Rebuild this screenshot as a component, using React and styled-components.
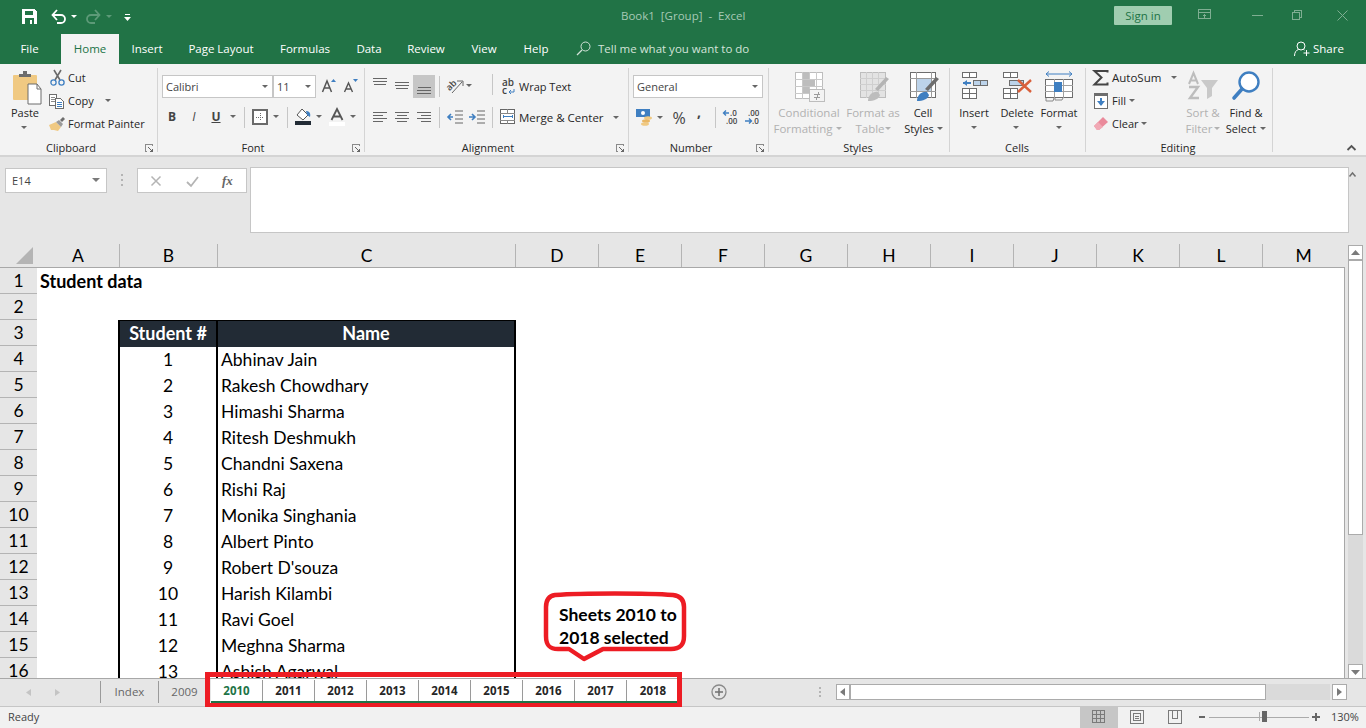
import React from 'react';
import styled, { createGlobalStyle } from 'styled-components';

const UI_FONT = '"Open Sans", "Noto Sans", "Liberation Sans", sans-serif';
const CELL_FONT = 'Lato, "Liberation Sans", sans-serif';

const GlobalStyle = createGlobalStyle`
  html, body {
    margin: 0;
    padding: 0;
    width: 1366px;
    height: 728px;
    overflow: hidden;
    background: #e6e6e6;
    font-family: ${UI_FONT};
  }
`;

const Window = styled.div`
  position: relative;
  width: 1366px;
  height: 728px;
  overflow: hidden;
`;

/* title bar and tabs */
const TitleBar = styled.div`
  position: absolute;
  left: 0;
  top: 0;
  width: 1366px;
  height: 64px;
  background: #217346;
`;

const Title = styled.div`
  position: absolute;
  left: 621px;
  top: 7px;
  font-size: 11.5px;
  line-height: 18px;
  color: #a6c9b5;
  white-space: pre;
`;

const SignIn = styled.div`
  position: absolute;
  left: 1114px;
  top: 6px;
  width: 58px;
  height: 19px;
  background: #a0cdb0;
  border-radius: 1px;
  color: #217346;
  font-size: 11.5px;
  line-height: 19px;
  text-align: center;
`;

const Tab = styled.div`
  position: absolute;
  left: ${(p) => p.$left}px;
  width: ${(p) => p.$width}px;
  top: 34px;
  height: 30px;
  line-height: 30px;
  text-align: center;
  font-size: 11.5px;
  color: ${(p) => (p.$active ? '#217346' : '#ffffff')};
  background: ${(p) => (p.$active ? '#f3f3f3' : 'transparent')};
`;

const TellMe = styled.div`
  position: absolute;
  left: 598px;
  top: 34px;
  line-height: 30px;
  font-size: 11.5px;
  color: #d3e3d9;
`;

const Share = styled.div`
  position: absolute;
  left: 1313px;
  top: 34px;
  line-height: 30px;
  font-size: 11.5px;
  color: #ffffff;
`;

/* ribbon */
const Ribbon = styled.div`
  position: absolute;
  left: 0;
  top: 64px;
  width: 1366px;
  height: 93px;
  background: #f3f3f3;
  border-bottom: 2px solid #d4d4d4;
  box-sizing: border-box;
`;

const GroupSep = styled.div`
  position: absolute;
  left: ${(p) => p.$x}px;
  top: 4px;
  width: 1px;
  height: 84px;
  background: #d4d4d4;
`;

const ToolSep = styled.div`
  position: absolute;
  left: ${(p) => p.$x}px;
  top: ${(p) => p.$y}px;
  width: 1px;
  height: 21px;
  background: #c6c6c6;
`;

const GroupLabel = styled.div`
  position: absolute;
  left: ${(p) => p.$center - 60}px;
  width: 120px;
  top: 75px;
  line-height: 17px;
  text-align: center;
  font-size: 11px;
  color: #262626;
`;

const SmallLabel = styled.div`
  position: absolute;
  left: ${(p) => p.$x}px;
  top: ${(p) => p.$y - 64 - 9}px;
  line-height: 18px;
  font-size: ${(p) => p.$size || 11}px;
  white-space: nowrap;
  color: #262626;
`;

const BigLabel = styled.div`
  position: absolute;
  left: ${(p) => p.$center - 50}px;
  width: 100px;
  top: ${(p) => p.$y - 64 - 9}px;
  line-height: 18px;
  text-align: center;
  font-size: ${(p) => (p.$dim ? 11.5 : 11)}px;
  white-space: nowrap;
  color: ${(p) => (p.$dim ? '#b1b1b1' : '#262626')};
`;

const Combo = styled.div`
  position: absolute;
  left: ${(p) => p.$x}px;
  top: 11px;
  width: ${(p) => p.$width}px;
  height: 23px;
  box-sizing: border-box;
  background: #ffffff;
  border: 1px solid #c6c6c6;
  padding-left: 3px;
  font-size: 11px;
  line-height: 21px;
  color: #444444;
`;

const Selected = styled.div`
  position: absolute;
  left: 413px;
  top: 11px;
  width: 22px;
  height: 23px;
  background: #c6c6c6;
`;

const Glyph = styled.div`
  position: absolute;
  left: ${(p) => p.$x}px;
  top: ${(p) => p.$y - 64 - 10}px;
  width: 16px;
  text-align: center;
  line-height: 20px;
  font-size: ${(p) => p.$size || 12}px;
  font-weight: ${(p) => p.$weight || 400};
  font-style: ${(p) => (p.$italic ? 'italic' : 'normal')};
  text-decoration: ${(p) => (p.$under ? 'underline' : 'none')};
  color: #444444;
`;

const IconText = styled.text`
  font-family: ${UI_FONT};
  font-size: ${(p) => p.$size || 9}px;
  font-weight: 600;
  fill: #444444;
`;

const IconBox = styled.svg`
  position: absolute;
  left: ${(p) => p.$x}px;
  top: ${(p) => p.$y}px;
  overflow: visible;
`;

/* each drawing takes page coordinates; the ribbon ones are shifted by the ribbon top */
const Draw = ({ x, y, w, h, children, crisp, ribbon }) => (
  <IconBox
    $x={x}
    $y={ribbon ? y - 64 : y}
    width={w}
    height={h}
    viewBox={`0 0 ${w} ${h}`}
    shapeRendering={crisp ? 'crispEdges' : 'auto'}
  >
    {children}
  </IconBox>
);

const Caret = ({ x, y, color = '#666666' }) => (
  <Draw x={x - 3} y={y - 2} w={6} h={4} ribbon>
    <path d="M0 0h6L3 3z" fill={color} />
  </Draw>
);

const Launcher = ({ x }) => (
  <Draw x={x - 4} y={144} w={8} h={8} ribbon crisp>
    <path d="M0 0h7M0 0v7M0 7h2M7 0v2" stroke="#8a8a8a" fill="none" />
    <path d="M3 3l4 4M5 7h3M7 5v3" stroke="#666666" fill="none" />
  </Draw>
);

const Lines = ({ x, y, widths, gap = 3, color = '#666666', w = 16 }) => (
  <Draw x={x} y={y} w={w} h={widths.length * gap + 1} ribbon crisp>
    {widths.map((item, i) => (
      <rect key={i} x={item[0]} y={i * gap} width={item[1]} height={1} fill={color} />
    ))}
  </Draw>
);

const RibbonIcons = () => (
  <>
    {/* paste */}
    <Draw x={13} y={71} w={29} h={32} ribbon>
      <rect x="0" y="4" width="24" height="25" rx="1" fill="#f0c982" />
      <path d="M6 6V3h4V0h4v3h4v3z" fill="#6d6d6d" />
      <path d="M15 13h9l4 5v15H15z" fill="#ffffff" stroke="#6d6d6d" />
      <path d="M24 13v5h4" fill="none" stroke="#6d6d6d" />
    </Draw>
    {/* cut */}
    <Draw x={50} y={70} w={15} h={16} ribbon>
      <path d="M4 0l6 10M11 0L5 10" stroke="#6a6a6a" strokeWidth="1.6" fill="none" />
      <circle cx="3.5" cy="12.5" r="2.6" fill="none" stroke="#3f7fc1" strokeWidth="1.3" />
      <circle cx="11.5" cy="12.5" r="2.6" fill="none" stroke="#3f7fc1" strokeWidth="1.3" />
    </Draw>
    {/* copy */}
    <Draw x={49} y={94} w={16} h={15} ribbon crisp>
      <path d="M0.5 0.5h7v11h-7z" fill="#fff" stroke="#6d6d6d" />
      <path d="M2 3h4M2 5h4M2 7h4" stroke="#8a8a8a" />
      <path d="M6.5 4.5h5l3 3v7h-8z" fill="#fff" stroke="#6d6d6d" />
      <path d="M8 8h5M8 10h5M8 12h5" stroke="#3f7fc1" />
    </Draw>
    {/* format painter */}
    <Draw x={49} y={117} w={17} h={15} ribbon>
      <path d="M0 8l7-3 5 5-3 4-4-1-3 0z" fill="#f0c982" />
      <path d="M7 5l3-2 4 4-2 3z" fill="#9a9a9a" />
      <path d="M11 3l3-3 2 2-3 3z" fill="#6d6d6d" />
    </Draw>

    {/* font */}
    <Draw x={322} y={79} w={15} h={14} ribbon>
      <path d="M0.5 13L5 2l4.5 11M2 9h6" stroke="#555" strokeWidth="1.5" fill="none" />
      <path d="M9 3l2.5-3L14 3z" fill="#3f7fc1" />
    </Draw>
    <Draw x={344} y={79} w={15} h={14} ribbon>
      <path d="M0.5 13L4.5 4l4 9M2 10h5" stroke="#555" strokeWidth="1.4" fill="none" />
      <path d="M9 0h5l-2.5 3z" fill="#3f7fc1" />
    </Draw>
    <Draw x={252} y={109} w={16} h={16} ribbon crisp>
      <rect x="1" y="1" width="14" height="14" fill="#fff" stroke="#6a6a6a" strokeWidth="2" />
      <path d="M8 4v8M4 8h8" stroke="#6a6a6a" strokeDasharray="1 1" />
    </Draw>
    <Draw x={295} y={108} w={17} h={18} ribbon>
      <path d="M2 7l5-6 6 6-5 5z" fill="#fff" stroke="#555" />
      <path d="M11 3c3 0 5 2 4 6l-3-2z" fill="#3f7fc1" />
      <rect x="0" y="13" width="16" height="4" fill="#222b35" />
    </Draw>
    <Draw x={329} y={108} w={17} h={18} ribbon>
      <path d="M2.5 12L8 1l5.5 11M4.5 8.5h7" stroke="#555" strokeWidth="1.8" fill="none" />
      <rect x="0" y="14" width="16" height="4" fill="#ffffff" />
    </Draw>

    {/* alignment */}
    <Lines x={373} y={78} widths={[[0, 14], [0, 14], [1, 12]]} />
    <Lines x={395} y={82} widths={[[0, 14], [0, 14], [1, 12]]} />
    <Lines x={417} y={87} widths={[[1, 13], [0, 14], [0, 14]]} />
    {/* orientation: slanted letters with an arrow */}
    <Draw x={447} y={78} w={18} h={16} ribbon>
      <IconText x="0" y="11" $size={9} transform="rotate(-45 4 9)">ab</IconText>
      <path d="M5 15L15 4M10 3h6v5" stroke="#666" fill="none" />
    </Draw>
    <Lines x={373} y={112} widths={[[0, 14], [0, 10], [0, 14], [0, 10]]} />
    <Lines x={395} y={112} widths={[[0, 14], [2, 10], [0, 14], [2, 10]]} />
    <Lines x={417} y={112} widths={[[0, 14], [4, 10], [0, 14], [4, 10]]} />
    <Draw x={447} y={110} w={16} h={14} ribbon>
      <path d="M8 1h8M8 5h8M8 9h8M8 13h8" stroke="#666" />
      <path d="M6 7H1M4 4L1 7l3 3" stroke="#3f7fc1" strokeWidth="1.6" fill="none" />
    </Draw>
    <Draw x={469} y={110} w={16} h={14} ribbon>
      <path d="M8 1h8M8 5h8M8 9h8M8 13h8" stroke="#666" />
      <path d="M0 7h5M3 4l3 3-3 3" stroke="#3f7fc1" strokeWidth="1.6" fill="none" />
    </Draw>
    {/* wrap text */}
    <Draw x={501} y={78} w={15} h={17} ribbon>
      <IconText x="1" y="8" $size={10}>ab</IconText>
      <IconText x="1" y="16" $size={10}>c</IconText>
      <path d="M13 11v3H8M10 12l-2 2 2 2" stroke="#3f7fc1" fill="none" />
    </Draw>
    <Draw x={500} y={109} w={16} h={15} ribbon crisp>
      <rect x="0.5" y="0.5" width="14" height="14" fill="#fff" stroke="#666" />
      <path d="M0 4h15M0 11h15M7 0v4M7 11v4" stroke="#888" />
      <path d="M3 7.5h9" stroke="#3f7fc1" />
      <path d="M3 6v3M12 6v3" stroke="#3f7fc1" />
    </Draw>

    {/* number */}
    <Draw x={636} y={109} w={17} h={16} ribbon>
      <rect x="0" y="0" width="14" height="8" fill="#3f7fc1" />
      <circle cx="7" cy="4" r="2" fill="#fff" />
      <ellipse cx="12" cy="9" rx="4" ry="1.8" fill="#f0c982" />
      <ellipse cx="10" cy="12" rx="4" ry="1.8" fill="#e9b765" />
      <ellipse cx="9" cy="15" rx="4" ry="1.8" fill="#f0c982" />
    </Draw>
    <Draw x={723} y={109} w={17} h={16} ribbon>
      <path d="M6 4H0.5M3 1.5L0.5 4 3 6.5" stroke="#3f7fc1" strokeWidth="1.4" fill="none" />
      <IconText x="7" y="7" $size={8}>.0</IconText>
      <IconText x="3" y="15" $size={8}>.00</IconText>
    </Draw>
    <Draw x={745} y={109} w={17} h={16} ribbon>
      <IconText x="3" y="7" $size={8}>.00</IconText>
      <path d="M0 12h6M4 9.5L6.5 12 4 14.500" stroke="#3f7fc1" strokeWidth="1.4" fill="none" />
      <IconText x="7" y="15" $size={8}>.0</IconText>
    </Draw>

    {/* styles */}
    <Draw x={795} y={72} w={30} h={30} ribbon crisp>
      <rect x="0.5" y="0.5" width="27" height="26" fill="#fff" stroke="#bdbdbd" />
      <path d="M7 0v27M14 0v27M21 0v27M0 7h28M0 14h28M0 21h28" stroke="#c9c9c9" />
      <rect x="8" y="1" width="6" height="6" fill="#bdbdbd" />
      <rect x="8" y="8" width="12" height="6" fill="#bdbdbd" />
      <rect x="8" y="15" width="6" height="6" fill="#bdbdbd" />
      <rect x="14.5" y="17.5" width="15" height="12" fill="#f3f3f3" stroke="#bdbdbd" />
      <path d="M19 22h6M19 25h6M24 20l-3 8" stroke="#9a9a9a" />
    </Draw>
    <Draw x={860} y={72} w={30} h={30} ribbon>
      <rect x="0.5" y="0.5" width="25" height="25" fill="#e3e3e3" stroke="#bdbdbd" shapeRendering="crispEdges" />
      <path d="M6 0v26M12 0v26M18 0v26M0 6h26M0 12h26M0 18h26" stroke="#cfcfcf" shapeRendering="crispEdges" />
      <path d="M29 7L18 19l-3-2L26 5z" fill="#b4b4b4" />
      <path d="M8 29c0-6 5-10 10-9l2 3c-1 4-6 6-12 6z" fill="#bdbdbd" />
    </Draw>
    <Draw x={910} y={72} w={30} h={30} ribbon>
      <rect x="0.5" y="0.5" width="25" height="25" fill="#fff" stroke="#6d6d6d" shapeRendering="crispEdges" />
      <rect x="6" y="6" width="15" height="13" fill="#bcd3ea" />
      <path d="M6 0v26M21 0v26M0 6h26M0 19h26" stroke="#9a9a9a" shapeRendering="crispEdges" />
      <path d="M29 7L18 19l-3-2L26 5z" fill="#6d6d6d" />
      <path d="M7 29c0-6 5-10 10-9l2 3c-1 4-6 6-12 6z" fill="#3f7fc1" />
    </Draw>

    {/* cells */}
    <Draw x={962} y={72} w={27} h={28} ribbon crisp>
      <path d="M0.5 0.5h14v5h-14zM7.5 0v5" fill="#fff" stroke="#6d6d6d" />
      <path d="M11.5 8.5h14v5h-14z" fill="#bcd3ea" stroke="#6d6d6d" />
      <path d="M18.5 8v6" stroke="#6d6d6d" />
      <path d="M0.5 16.5h14v10h-14zM7.5 16v10M0 21.5h14" fill="#fff" stroke="#6d6d6d" />
      <path d="M1 11h8" stroke="#3f7fc1" strokeWidth="2" />
      <path d="M1 11l4-3v6z" fill="#3f7fc1" shapeRendering="auto" />
    </Draw>
    <Draw x={1003} y={72} w={32} h={28} ribbon>
      <g shapeRendering="crispEdges">
        <path d="M0.5 0.5h14v5h-14zM7.5 0v5" fill="#fff" stroke="#6d6d6d" />
        <path d="M6.5 8.5h14v5h-14z" fill="#bcd3ea" stroke="#6d6d6d" />
        <path d="M0.5 16.5h14v10h-14zM7.5 16v10M0 21.5h14" fill="#fff" stroke="#6d6d6d" />
      </g>
      <path d="M15 8l13 12M28 8L15 20" stroke="#d9603b" strokeWidth="2.4" />
    </Draw>
    <Draw x={1045} y={71} w={29} h={31} ribbon>
      <path d="M1 3h26M1 3l3-2.5M1 3l3 2.5M27 3l-3-2.5M27 3l-3 2.5" stroke="#3f7fc1" fill="none" />
      <g shapeRendering="crispEdges">
        <rect x="0.5" y="8.5" width="27" height="18" fill="#fff" stroke="#6d6d6d" />
        <path d="M9 8v19M18 8v19M0 14.5h28M0 20.5h28" stroke="#a0a0a0" />
        <rect x="9" y="11" width="8" height="10" fill="#3f7fc1" />
      </g>
      <path d="M1 27v3h7l1-3M10 27v2h7l1-2" fill="none" stroke="#8a8a8a" />
    </Draw>

    {/* editing */}
    <Draw x={1093} y={70} w={16} h={16} ribbon>
      <path d="M14.5 2.5V1H1.5l7 6.500-7 7h13v-2" fill="none" stroke="#444" strokeWidth="2" />
    </Draw>
    <Draw x={1094} y={93} w={15} h={16} ribbon crisp>
      <rect x="0.5" y="0.5" width="13" height="15" fill="#fff" stroke="#6d6d6d" />
      <rect x="0" y="0" width="14" height="3" fill="#6d6d6d" />
      <path d="M7 5v7" stroke="#3f7fc1" strokeWidth="2" />
      <path d="M3 8l4 5 4-5z" fill="#3f7fc1" shapeRendering="auto" />
    </Draw>
    <Draw x={1094} y={117} w={15} h={14} ribbon>
      <path d="M0 9l9-9 5 5-9 8H3z" fill="#ea8a9b" />
      <path d="M0 9l4-4 5 5-4 3H3z" fill="#f1a9b5" />
    </Draw>
    <Draw x={1188} y={72} w={31} h={29} ribbon>
      <path d="M1 12L5.5 1 10 12M2.5 8.5h6" stroke="#bdbdbd" strokeWidth="2" fill="none" />
      <path d="M1 15h9L2 26h9" stroke="#bdbdbd" strokeWidth="2.4" fill="none" />
      <path d="M13 8h17l-6 8v8l-5 3V16z" fill="#c9c9c9" />
    </Draw>
    <Draw x={1231} y={70} w={30} h={31} ribbon>
      <circle cx="18" cy="12" r="9.5" fill="#fff" stroke="#3f7fc1" strokeWidth="2.4" />
      <path d="M11 19L3 28" stroke="#3f7fc1" strokeWidth="3.6" strokeLinecap="round" />
    </Draw>
    {/* collapse ribbon */}
    <Draw x={1347} y={145} w={9} h={6} ribbon>
      <path d="M0.5 5L4.5 1l4 4" stroke="#555" strokeWidth="1.8" fill="none" />
    </Draw>
  </>
);

const RibbonBody = () => (
  <Ribbon>
    <BigLabel $center={25} $y={113}>Paste</BigLabel>
    <Caret x={24} y={128} />
    <SmallLabel $x={68} $y={78}>Cut</SmallLabel>
    <SmallLabel $x={68} $y={101}>Copy</SmallLabel>
    <Caret x={108} y={101} />
    <SmallLabel $x={68} $y={124}>Format Painter</SmallLabel>
    <GroupLabel $center={71}>Clipboard</GroupLabel>
    <Launcher x={149} />
    <GroupSep $x={157} />

    <Combo $x={162} $width={111}>Calibri</Combo>
    <Combo $x={273} $width={43}>11</Combo>
    <Caret x={265} y={87} />
    <Caret x={308} y={87} />
    <Glyph $x={164} $y={117} $weight={700}>B</Glyph>
    <Glyph $x={186} $y={117} $italic>I</Glyph>
    <Glyph $x={208} $y={117} $weight={700} $under>U</Glyph>
    <Caret x={233} y={117} />
    <ToolSep $x={244} $y={43} />
    <Caret x={276} y={117} />
    <ToolSep $x={287} $y={43} />
    <Caret x={319} y={117} />
    <Caret x={353} y={117} />
    <GroupLabel $center={253}>Font</GroupLabel>
    <Launcher x={356} />
    <GroupSep $x={364} />

    <Selected />
    <ToolSep $x={439} $y={12} />
    <Caret x={469} y={86} />
    <ToolSep $x={492} $y={10} />
    <ToolSep $x={492} $y={43} />
    <ToolSep $x={439} $y={43} />
    <SmallLabel $x={519} $y={87}>Wrap Text</SmallLabel>
    <SmallLabel $x={519} $y={118} $size={11.5}>Merge &amp; Center</SmallLabel>
    <Caret x={616} y={118} />
    <GroupLabel $center={488}>Alignment</GroupLabel>
    <Launcher x={620} />
    <GroupSep $x={628} />

    <Combo $x={633} $width={130}>General</Combo>
    <Caret x={755} y={87} />
    <Caret x={660} y={118} />
    <Glyph $x={671} $y={118} $size={16}>%</Glyph>
    <Glyph $x={691} $y={112} $size={14} $weight={700}>,</Glyph>
    <ToolSep $x={715} $y={43} />
    <GroupLabel $center={691}>Number</GroupLabel>
    <Launcher x={760} />
    <GroupSep $x={768} />

    <BigLabel $center={809} $y={113} $dim>Conditional</BigLabel>
    <BigLabel $center={803} $y={129} $dim>Formatting</BigLabel>
    <Caret x={839} y={129} color="#b1b1b1" />
    <BigLabel $center={873} $y={113} $dim>Format as</BigLabel>
    <BigLabel $center={870} $y={129} $dim>Table</BigLabel>
    <Caret x={888} y={129} color="#b1b1b1" />
    <BigLabel $center={923} $y={113}>Cell</BigLabel>
    <BigLabel $center={919} $y={129}>Styles</BigLabel>
    <Caret x={940} y={129} />
    <GroupLabel $center={858}>Styles</GroupLabel>
    <GroupSep $x={949} />

    <BigLabel $center={974} $y={113}>Insert</BigLabel>
    <Caret x={974} y={128} />
    <BigLabel $center={1017} $y={113}>Delete</BigLabel>
    <Caret x={1016} y={128} />
    <BigLabel $center={1059} $y={113}>Format</BigLabel>
    <Caret x={1059} y={128} />
    <GroupLabel $center={1017}>Cells</GroupLabel>
    <GroupSep $x={1085} />

    <SmallLabel $x={1112} $y={78} $size={11.5}>AutoSum</SmallLabel>
    <Caret x={1174} y={78} />
    <SmallLabel $x={1112} $y={101}>Fill</SmallLabel>
    <Caret x={1132} y={101} />
    <SmallLabel $x={1112} $y={124}>Clear</SmallLabel>
    <Caret x={1144} y={124} />
    <BigLabel $center={1203} $y={113} $dim>Sort &amp;</BigLabel>
    <BigLabel $center={1199} $y={129} $dim>Filter</BigLabel>
    <Caret x={1217} y={129} color="#b1b1b1" />
    <BigLabel $center={1246} $y={113}>Find &amp;</BigLabel>
    <BigLabel $center={1241} $y={129}>Select</BigLabel>
    <Caret x={1263} y={129} />
    <GroupLabel $center={1178}>Editing</GroupLabel>
    <GroupSep $x={1272} />

    <RibbonIcons />
  </Ribbon>
);

/* formula bar */
const NameBox = styled.div`
  position: absolute;
  left: 5px;
  top: 168px;
  width: 102px;
  height: 25px;
  box-sizing: border-box;
  background: #ffffff;
  border: 1px solid #c6c6c6;
  padding-left: 6px;
  font-size: 11px;
  line-height: 23px;
  color: #444444;
`;

const FormulaButtons = styled.div`
  position: absolute;
  left: 137px;
  top: 168px;
  width: 110px;
  height: 25px;
  box-sizing: border-box;
  background: #ffffff;
  border: 1px solid #c6c6c6;
`;

const FormulaInput = styled.div`
  position: absolute;
  left: 250px;
  top: 167px;
  width: 1099px;
  height: 66px;
  box-sizing: border-box;
  background: #ffffff;
  border: 1px solid #c6c6c6;
`;

const Fx = styled.div`
  position: absolute;
  left: 84px;
  top: 2px;
  font-family: "Liberation Serif", serif;
  font-style: italic;
  font-weight: 700;
  font-size: 13px;
  line-height: 20px;
  color: #666666;
`;

/* sheet */
const ColumnHeaders = styled.div`
  position: absolute;
  left: 37px;
  top: 244px;
  display: flex;
  height: 23px;
`;

const ColumnHeader = styled.div`
  width: ${(p) => p.$width}px;
  height: 23px;
  box-sizing: border-box;
  border-right: 1px solid #b4b4b4;
  text-align: center;
  font-family: ${CELL_FONT};
  font-size: 17.5px;
  line-height: 23px;
  color: #000000;
  &:last-child {
    border-right: 0;
  }
`;

const HeaderRule = styled.div`
  position: absolute;
  left: 0;
  top: 267px;
  width: 1345px;
  height: 1px;
  background: #a8a8a8;
`;

const RowHeaders = styled.div`
  position: absolute;
  left: 0;
  top: 268px;
  width: 37px;
  height: 410px;
  overflow: hidden;
`;

const RowHeader = styled.div`
  height: 26px;
  box-sizing: border-box;
  border-bottom: 1px solid #b4b4b4;
  text-align: center;
  font-family: ${CELL_FONT};
  font-size: 17.5px;
  line-height: 25px;
  color: #000000;
`;

const Sheet = styled.div`
  position: absolute;
  left: 37px;
  top: 268px;
  width: 1307px;
  height: 410px;
  overflow: hidden;
  background: #ffffff;
  font-family: ${CELL_FONT};
  font-size: 17.5px;
  color: #000000;
`;

const SheetEdge = styled.div`
  position: absolute;
  left: 1344px;
  top: 267px;
  width: 1px;
  height: 411px;
  background: #a8a8a8;
`;

const SheetTitle = styled.div`
  position: absolute;
  left: 3px;
  top: 0;
  line-height: 26px;
  font-size: 18px;
  font-weight: 700;
`;

const StudentTable = styled.div`
  position: absolute;
  left: 81px;
  top: 52px;
  width: 398px;
  box-sizing: border-box;
  border: solid #000000;
  border-width: 2px 2px 0;
`;

const StudentRow = styled.div`
  display: grid;
  grid-template-columns: 98px 1fr;
  height: 26px;
  line-height: 25px;
  background: ${(p) => (p.$head ? '#222b35' : 'transparent')};
  color: ${(p) => (p.$head ? '#ffffff' : '#000000')};
  font-weight: ${(p) => (p.$head ? 700 : 400)};
  font-size: ${(p) => (p.$head ? 18 : 17.5)}px;
  margin-top: ${(p) => (p.$head ? '-1px' : '0')};
`;

const NumberCell = styled.div`
  text-align: center;
  border-right: 2px solid #000000;
  box-sizing: border-box;
`;

const NameCell = styled.div`
  text-align: ${(p) => (p.$head ? 'center' : 'left')};
  padding-left: ${(p) => (p.$head ? 0 : 3)}px;
`;

const CalloutText = styled.div`
  position: absolute;
  left: 559px;
  top: 603px;
  font-family: ${CELL_FONT};
  font-size: 17.5px;
  font-weight: 700;
  line-height: 23px;
  white-space: nowrap;
  color: #000000;
`;

/* sheet tabs */
const TabBar = styled.div`
  position: absolute;
  left: 0;
  top: 678px;
  width: 1366px;
  height: 29px;
  box-sizing: border-box;
  background: #e6e6e6;
  border-top: 1px solid #a8a8a8;
  border-bottom: 1px solid #c6c6c6;
`;

const PlainSheet = styled.div`
  position: absolute;
  left: ${(p) => p.$x}px;
  width: ${(p) => p.$width}px;
  top: 2px;
  height: 22px;
  box-sizing: border-box;
  border-left: 1px solid #9a9a9a;
  text-align: center;
  font-size: 11.5px;
  line-height: 21px;
  color: #666666;
`;

const Selection = styled.div`
  position: absolute;
  left: 211px;
  top: 0;
  height: 22px;
  display: flex;
  background: #ffffff;
  border-bottom: 2px solid #217346;
`;

const GroupedSheet = styled.div`
  width: 52px;
  height: 21px;
  margin-top: 1px;
  box-sizing: border-box;
  border-right: 1px solid #9a9a9a;
  text-align: center;
  font-size: 11.5px;
  font-weight: 700;
  line-height: 21px;
  color: ${(p) => (p.$active ? '#217346' : '#262626')};
  &:last-child {
    border-right: 0;
  }
`;

const RedFrame = styled.div`
  position: absolute;
  left: 205px;
  top: 672px;
  width: 477px;
  height: 37px;
  box-sizing: border-box;
  border: solid #ed1c24;
  border-width: 5px 5px 6px;
`;

const HTrack = styled.div`
  position: absolute;
  left: ${(p) => p.$x}px;
  top: 684px;
  width: ${(p) => p.$width}px;
  height: 16px;
  box-sizing: border-box;
  background: ${(p) => p.$bg || '#ffffff'};
  border: ${(p) => (p.$bare ? 0 : '1px solid #ababab')};
`;

const VTrack = styled.div`
  position: absolute;
  left: 1348px;
  top: ${(p) => p.$y}px;
  width: 15px;
  height: ${(p) => p.$height}px;
  box-sizing: border-box;
  background: ${(p) => p.$bg || '#ffffff'};
  border: ${(p) => (p.$bare ? 0 : '1px solid #ababab')};
`;

/* status bar */
const StatusBar = styled.div`
  position: absolute;
  left: 0;
  top: 707px;
  width: 1366px;
  height: 21px;
  background: #f1f1f1;
`;

const Ready = styled.div`
  position: absolute;
  left: 8px;
  top: 0;
  font-size: 11px;
  line-height: 20px;
  color: #444444;
`;

const NormalView = styled.div`
  position: absolute;
  left: 1080px;
  top: 0;
  width: 38px;
  height: 21px;
  background: #c6c6c6;
`;

const ZoomLabel = styled.div`
  position: absolute;
  left: 1331px;
  top: 0;
  font-size: 11px;
  line-height: 20px;
  color: #444444;
`;

const COLUMNS = [
  ['A', 83], ['B', 98], ['C', 298], ['D', 83], ['E', 83], ['F', 83], ['G', 83],
  ['H', 83], ['I', 83], ['J', 83], ['K', 83], ['L', 83], ['M', 81],
];
const TABS = [
  ['File', 0, 59], ['Home', 61, 58, true], ['Insert', 119, 56], ['Page Layout', 175, 92],
  ['Formulas', 267, 76], ['Data', 343, 52], ['Review', 395, 62], ['View', 457, 54], ['Help', 511, 50],
];
const STUDENTS = [
  'Abhinav Jain', 'Rakesh Chowdhary', 'Himashi Sharma', 'Ritesh Deshmukh', 'Chandni Saxena',
  'Rishi Raj', 'Monika Singhania', 'Albert Pinto', "Robert D'souza", 'Harish Kilambi',
  'Ravi Goel', 'Meghna Sharma', 'Ashish Agarwal',
];
const YEARS = [2010, 2011, 2012, 2013, 2014, 2015, 2016, 2017, 2018];

export default function App() {
  return (
    <Window>
      <GlobalStyle />
      <TitleBar>
        {/* quick access */}
        <Draw x={22} y={9} w={15} h={15} crisp>
          <path d="M0 0h12l3 3v12H0z" fill="#fff" />
          <rect x="3" y="2" width="8" height="4" fill="#217346" />
          <rect x="3" y="9" width="9" height="6" fill="#217346" />
          <rect x="8" y="11" width="2" height="4" fill="#fff" />
        </Draw>
        <Draw x={51} y={9} w={15} h={15}>
          <path d="M2 6h8a4 4 0 0 1 0 8H6" fill="none" stroke="#fff" strokeWidth="1.8" />
          <path d="M6 1L1.5 6 6 11" fill="none" stroke="#fff" strokeWidth="1.8" />
        </Draw>
        <Draw x={71} y={15} w={6} h={4}><path d="M0 0h6L3 3z" fill="#fff" /></Draw>
        <Draw x={86} y={9} w={15} h={15}>
          <path d="M13 6H5a4 4 0 0 0 0 8h4" fill="none" stroke="#5d9a78" strokeWidth="1.8" />
          <path d="M9 1l4.5 5L9 11" fill="none" stroke="#5d9a78" strokeWidth="1.8" />
        </Draw>
        <Draw x={106} y={15} w={6} h={4}><path d="M0 0h6L3 3z" fill="#5d9a78" /></Draw>
        <Draw x={124} y={14} w={7} h={7} crisp>
          <path d="M1 0h5v1H1z" fill="#fff" />
          <path d="M0 3h7L3.5 7z" fill="#fff" shapeRendering="auto" />
        </Draw>

        <Title>Book1  [Group]  -  Excel</Title>
        <SignIn>Sign in</SignIn>
        <Draw x={1198} y={9} w={14} h={12} crisp>
          <rect x="0.5" y="0.5" width="12" height="9" fill="none" stroke="#7fae92" />
          <path d="M0 3h13M6.5 9V5M5 6.5h3" stroke="#7fae92" fill="none" />
        </Draw>
        <Draw x={1252} y={15} w={12} h={2} crisp><rect width="11" height="1" fill="#7fae92" /></Draw>
        <Draw x={1292} y={10} w={12} h={12} crisp>
          <path d="M0.5 2.5h7v7h-7zM2.5 2.5v-2h7v7h-2" fill="none" stroke="#7fae92" />
        </Draw>
        <Draw x={1337} y={10} w={11} h={11}>
          <path d="M0.5 0.5l10 10M10.5 0.5l-10 10" stroke="#7fae92" />
        </Draw>

        {TABS.map(([label, left, width, active]) => (
          <Tab key={label} $left={left} $width={width} $active={active}>{label}</Tab>
        ))}
        <Draw x={576} y={41} w={15} h={15}>
          <circle cx="9.5" cy="5.5" r="4.5" fill="none" stroke="#d3e3d9" />
          <path d="M6 9l-5 5" stroke="#d3e3d9" strokeWidth="1.3" />
        </Draw>
        <TellMe>Tell me what you want to do</TellMe>
        <Draw x={1294} y={41} w={16} h={16}>
          <circle cx="7" cy="5" r="4" fill="none" stroke="#fff" />
          <path d="M0.5 15c0-4 2-6 4-6.5M9.5 8.5l1 .5" stroke="#fff" fill="none" />
          <path d="M12.5 9v6M9.5 12h6" stroke="#fff" />
        </Draw>
        <Share>Share</Share>
      </TitleBar>

      <RibbonBody />

      <NameBox>E14</NameBox>
      <Draw x={92} y={178} w={9} h={5}><path d="M0 0h8L4 4z" fill="#7a7a7a" /></Draw>
      <Draw x={121} y={174} w={3} h={13} crisp>
        <path d="M0 0h2v2H0zM0 5h2v2H0zM0 10h2v2H0z" fill="#b4b4b4" />
      </Draw>
      <FormulaButtons>
        <Draw x={13} y={7} w={10} h={10}>
          <path d="M0.5 0.5l9 9M9.5 0.5l-9 9" stroke="#b4b4b4" strokeWidth="1.5" />
        </Draw>
        <Draw x={48} y={7} w={13} h={11}>
          <path d="M1 6l4 4 7-9" stroke="#b4b4b4" strokeWidth="1.8" fill="none" />
        </Draw>
        <Fx>fx</Fx>
      </FormulaButtons>
      <FormulaInput />
      <Draw x={1349} y={172} w={7} h={5}>
        <path d="M0.5 4.5L3.5 1l3 3.5" stroke="#707070" strokeWidth="1.5" fill="none" />
      </Draw>

      <Draw x={16} y={247} w={18} h={18}><path d="M17 0v17H0z" fill="#b4b4b4" /></Draw>
      <ColumnHeaders>
        {COLUMNS.map(([label, width]) => (
          <ColumnHeader key={label} $width={width}>{label}</ColumnHeader>
        ))}
      </ColumnHeaders>
      <HeaderRule />
      <RowHeaders>
        {Array.from({ length: 16 }, (_, i) => <RowHeader key={i}>{i + 1}</RowHeader>)}
      </RowHeaders>

      <Sheet>
        <SheetTitle>Student data</SheetTitle>
        <StudentTable>
          <StudentRow $head>
            <NumberCell>Student #</NumberCell>
            <NameCell $head>Name</NameCell>
          </StudentRow>
          {STUDENTS.map((name, i) => (
            <StudentRow key={name}>
              <NumberCell>{i + 1}</NumberCell>
              <NameCell>{name}</NameCell>
            </StudentRow>
          ))}
        </StudentTable>
      </Sheet>
      <SheetEdge />

      <VTrack $y={245} $height={15} />
      <Draw x={1351} y={250} w={9} h={5}><path d="M0 5l4.5-5L9 5z" fill="#7a7a7a" /></Draw>
      <VTrack $y={260} $height={275} />
      <VTrack $y={535} $height={129} $bg="#dadada" $bare />
      <VTrack $y={664} $height={15} />
      <Draw x={1351} y={670} w={9} h={5}><path d="M0 0h9L4.5 5z" fill="#7a7a7a" /></Draw>

      <TabBar>
        <Draw x={26} y={10} w={6} h={8}><path d="M5 0v7L0 3.5z" fill="#c4c4c4" /></Draw>
        <Draw x={55} y={10} w={6} h={8}><path d="M0 0v7l5-3.5z" fill="#c4c4c4" /></Draw>
        <PlainSheet $x={100} $width={58}>Index</PlainSheet>
        <PlainSheet $x={158} $width={52}>2009</PlainSheet>
        <Selection>
          {YEARS.map((year, i) => (
            <GroupedSheet key={year} $active={i === 0}>{year}</GroupedSheet>
          ))}
        </Selection>
        <Draw x={711} y={5} w={16} h={16}>
          <circle cx="8" cy="8" r="7" fill="none" stroke="#8a8a8a" strokeWidth="1.3" />
          <path d="M8 4v8M4 8h8" stroke="#707070" strokeWidth="1.5" />
        </Draw>
        <Draw x={819} y={8} w={3} h={11} crisp>
          <path d="M0 0h2v2H0zM0 4h2v2H0zM0 8h2v2H0z" fill="#b4b4b4" />
        </Draw>
      </TabBar>

      <HTrack $x={836} $width={14} />
      <Draw x={840} y={688} w={5} h={8}><path d="M5 0v8L0 4z" fill="#7a7a7a" /></Draw>
      <HTrack $x={850} $width={416} />
      <HTrack $x={1266} $width={64} $bg="#dadada" $bare />
      <HTrack $x={1332} $width={15} />
      <Draw x={1337} y={688} w={5} h={8}><path d="M0 0v8l5-4z" fill="#7a7a7a" /></Draw>

      {/* the callout and frame are drawn over the screenshot */}
      <Draw x={543} y={592} w={144} h={70}>
        <path
          d="M12 3C40 1 104 1 130 3 138 4 141 8 141 15V44C141 53 137 57 128 57H60L41 67 26 57H15C6 57 3 53 3 44V15C3 8 6 4 12 3Z"
          fill="#ffffff"
          stroke="#ed1c24"
          strokeWidth="4.5"
          strokeLinejoin="round"
        />
      </Draw>
      <CalloutText>Sheets 2010 to<br />2018 selected</CalloutText>
      <RedFrame />

      <StatusBar>
        <Ready>Ready</Ready>
        <NormalView />
        <Draw x={1092} y={3} w={14} h={14} crisp>
          <rect x="0.5" y="0.5" width="12" height="12" fill="none" stroke="#7a7a7a" />
          <path d="M4.5 0v13M8.5 0v13M0 4.5h13M0 8.5h13" stroke="#7a7a7a" />
        </Draw>
        <Draw x={1130} y={3} w={14} h={14} crisp>
          <rect x="0.5" y="0.5" width="13" height="13" fill="none" stroke="#7a7a7a" />
          <rect x="3.5" y="3.5" width="7" height="7" fill="none" stroke="#7a7a7a" />
          <path d="M5 6h4M5 8h4" stroke="#7a7a7a" />
        </Draw>
        <Draw x={1168} y={3} w={14} h={14} crisp>
          <path d="M0.5 13.5V0.5h13v13zM4.5 0v8h5V0" fill="none" stroke="#7a7a7a" />
        </Draw>
        <Draw x={1199} y={9} w={7} h={3} crisp><rect width="6" height="2" fill="#666" /></Draw>
        <Draw x={1209} y={10} w={100} h={1} crisp><rect width="100" height="1" fill="#ababab" /></Draw>
        <Draw x={1259} y={5} w={1} h={9} crisp><rect width="1" height="9" fill="#ababab" /></Draw>
        <Draw x={1262} y={4} w={5} h={11} crisp><rect width="5" height="11" fill="#666" /></Draw>
        <Draw x={1312} y={6} w={8} h={8} crisp>
          <path d="M3 0h2v8H3zM0 3h8v2H0z" fill="#666" />
        </Draw>
        <ZoomLabel>130%</ZoomLabel>
      </StatusBar>
    </Window>
  );
}
